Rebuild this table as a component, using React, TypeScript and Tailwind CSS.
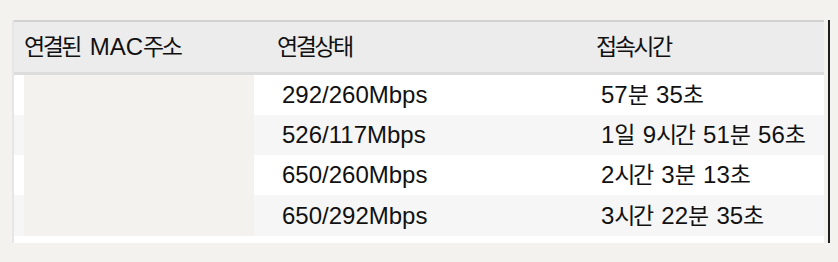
import React from "react";

const rows = [
  { speed: "292/260Mbps", time: "57분 35초" },
  { speed: "526/117Mbps", time: "1일 9시간 51분 56초" },
  { speed: "650/260Mbps", time: "2시간 3분 13초" },
  { speed: "650/292Mbps", time: "3시간 22분 35초" },
];

function Txt({ s }: { s: string }) {
  const parts = s.split(/([\uAC00-\uD7A3]+)/).filter((p) => p.length > 0);
  return (
    <span className="whitespace-nowrap [word-spacing:3px]">
      {parts.map((p, i) =>
        /[\uAC00-\uD7A3]/.test(p) ? (
          <span key={i} className="text-[23px] tracking-[-2.5px]">
            {p}
          </span>
        ) : (
          <span key={i}>{p}</span>
        )
      )}
    </span>
  );
}

export default function App() {
  return (
    <div className="w-[838px] h-[262px] bg-[#f3f2ef] pt-[20px] pl-[12px] flex font-['Liberation_Sans','Noto_Sans_CJK_KR',sans-serif] text-[24px] text-[#111] leading-none">
      <div className="w-[812px] h-[223px] flex flex-col border-l-2 border-[#e6e6e6]">
        <div className="h-[55px] flex items-center bg-[#ececec] border-t-2 border-t-[#d2d2d2] border-b-[3px] border-b-[#dcdcdc]">
          <div className="w-[240px] pl-[10px]">
            <Txt s="연결된 MAC주소" />
          </div>
          <div className="w-[319px] pl-[23px]">
            <Txt s="연결상태" />
          </div>
          <div className="flex-1 pl-[23px]">
            <Txt s="접속시간" />
          </div>
        </div>
        {rows.map((r, i) => (
          <div
            key={i}
            className={
              "flex items-stretch " +
              (i === 3 ? "h-[41px] " : "h-[40px] ") +
              (i % 2 === 0 ? "bg-white" : "bg-[#f6f6f6]")
            }
          >
            <div className="w-[10px]" />
            <div className="w-[230px] bg-[#f3f2ef]" />
            <div className="w-[319px] pl-[28px] flex items-center">
              <Txt s={r.speed} />
            </div>
            <div className="flex-1 pl-[28px] flex items-center">
              <Txt s={r.time} />
            </div>
          </div>
        ))}
        <div className="h-[7px] bg-white" />
      </div>
      <div className="ml-[4px] w-[2px] h-[223px] bg-[#1e1e1e]" />
    </div>
  );
}
